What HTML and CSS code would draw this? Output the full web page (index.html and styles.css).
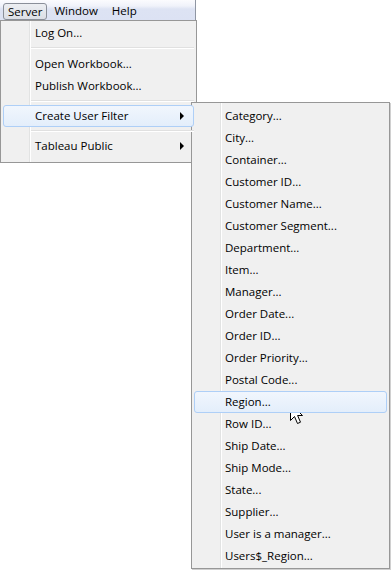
FILE: index.html
```html
<!DOCTYPE html>
<html>
<head>
<meta charset="utf-8">
<link rel="stylesheet" href="styles.css">
</head>
<body>
<div class="menubar">
  <span class="mb-item mb-active">Server</span>
  <span class="mb-item">Window</span>
  <span class="mb-item">Help</span>
</div>
<div class="menu main">
  <div class="item"><span>Log On...</span></div>
  <div class="sep sep-first"></div>
  <div class="item"><span>Open Workbook...</span></div>
  <div class="item"><span>Publish Workbook...</span></div>
  <div class="sep"></div>
  <div class="item hot"><span>Create User Filter</span><i class="arrow"></i></div>
  <div class="sep"></div>
  <div class="item"><span>Tableau Public</span><i class="arrow"></i></div>
</div>
<div class="menu sub">
  <div class="item"><span>Category...</span></div>
  <div class="item"><span>City...</span></div>
  <div class="item"><span>Container...</span></div>
  <div class="item"><span>Customer ID...</span></div>
  <div class="item"><span>Customer Name...</span></div>
  <div class="item"><span>Customer Segment...</span></div>
  <div class="item"><span>Department...</span></div>
  <div class="item"><span>Item...</span></div>
  <div class="item"><span>Manager...</span></div>
  <div class="item"><span>Order Date...</span></div>
  <div class="item"><span>Order ID...</span></div>
  <div class="item"><span>Order Priority...</span></div>
  <div class="item"><span>Postal Code...</span></div>
  <div class="item hot"><span>Region...</span></div>
  <div class="item"><span>Row ID...</span></div>
  <div class="item"><span>Ship Date...</span></div>
  <div class="item"><span>Ship Mode...</span></div>
  <div class="item"><span>State...</span></div>
  <div class="item"><span>Supplier...</span></div>
  <div class="item"><span>User is a manager...</span></div>
  <div class="item"><span>Users$_Region...</span></div>
</div>
<svg class="cursor" width="14" height="22" viewBox="0 0 14 22">
  <path d="M0.5 0.5 L0.5 17.5 L4.5 13.5 L7.5 20.5 L10.5 19.2 L7.6 12.5 L12.5 12.5 Z" fill="#fff" stroke="#000" stroke-width="1" stroke-linejoin="miter"/>
</svg>
</body>
</html>
```
FILE: styles.css
```css
html, body {
  margin: 0;
  padding: 0;
  background: #ffffff;
}
body {
  position: relative;
  width: 391px;
  height: 570px;
  overflow: hidden;
  font-family: "Open Sans", "Noto Sans", sans-serif;
  font-size: 11.5px;
  color: #000;
}
.menubar {
  width: 196px;
  height: 20px;
  display: flex;
  align-items: center;
  padding-left: 3px;
  box-sizing: border-box;
  background: linear-gradient(#fbfbfe 0%, #f0f2fa 30%, #dde3f3 45%, #dce2f3 100%);
  border-right: 1px solid #8f96a3;
}
.mb-item {
  height: 17px;
  line-height: 15px;
  padding: 0 4px;
  margin-right: 4px;
  box-sizing: border-box;
  border: 1px solid transparent;
}
.mb-active {
  border: 1px solid #8a8f99;
  border-radius: 3px;
  background: linear-gradient(#eceef2, #dcdfe6);
  margin-top: 2px;
  padding: 0 4px 0 4px;
  margin-right: 2px;
}
.menu {
  position: absolute;
  background: #f0f0f0;
  border: 1px solid #979797;
  box-sizing: border-box;
  display: flex;
  flex-direction: column;
}
.menu::before {
  content: "";
  position: absolute;
  top: 0;
  bottom: 0;
  width: 1px;
  background: #e2e3e3;
  box-shadow: 1px 0 0 #ffffff;
}
.main {
  left: 0;
  top: 20px;
  width: 197px;
  height: 143px;
  padding: 1px 2px 4px 2px;
}
.main::before { left: 28px; }
.sub {
  left: 191px;
  top: 102px;
  width: 199px;
  height: 467px;
  padding: 2px 2px 1px 2px;
  box-shadow: 1px 1px 0 #d0d0d0;
}
.sub::before { left: 28px; }
.item {
  position: relative;
  height: 22px;
  flex: none;
  display: flex;
  align-items: center;
  padding-left: 31px;
  padding-bottom: 2px;
  box-sizing: border-box;
  border: 1px solid transparent;
  border-radius: 3px;
  z-index: 1;
}
.sub .item { padding-left: 30px; }
.item.hot {
  border-color: #aecff7;
  background: linear-gradient(#f1f6fd, #e3eefb);
}
.sep {
  height: 8px;
  flex: none;
  position: relative;
  z-index: 1;
}
.sep-first { height: 9px; }
.sep::after {
  content: "";
  position: absolute;
  left: 28px;
  right: 0;
  top: 3px;
  height: 1px;
  background: #e0e0e0;
  box-shadow: 0 1px 0 #ffffff;
}
.arrow {
  position: absolute;
  right: 9px;
  top: 6px;
  width: 0;
  height: 0;
  border-top: 4px solid transparent;
  border-bottom: 4px solid transparent;
  border-left: 4px solid #000;
}
.cursor {
  position: absolute;
  left: 290px;
  top: 403px;
}
```
